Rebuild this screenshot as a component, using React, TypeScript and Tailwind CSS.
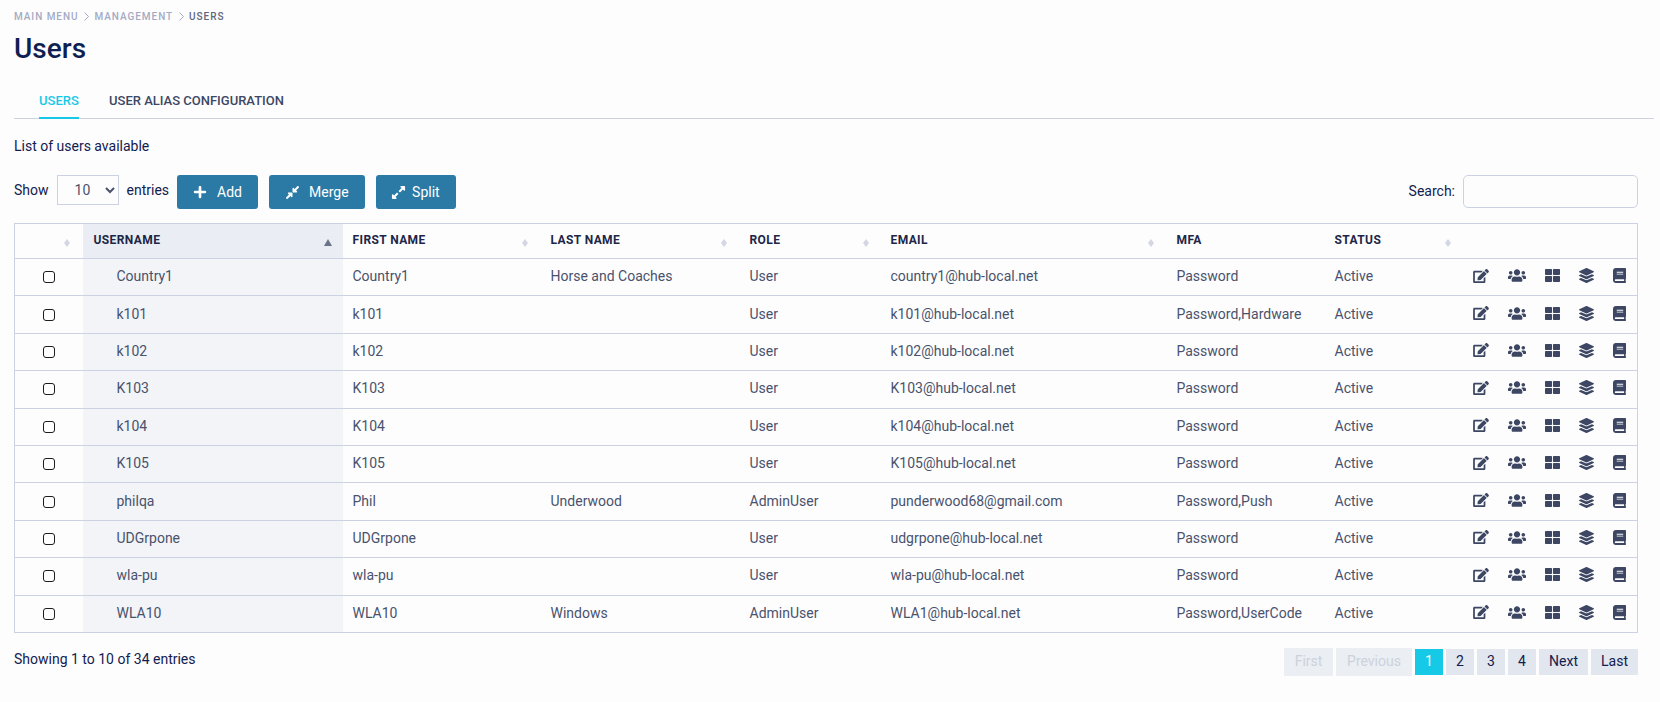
import { FaEdit, FaUsers, FaThLarge, FaLayerGroup, FaBook, FaPlus, FaCompressAlt, FaExpandAlt } from "react-icons/fa";

const users = [
  ["Country1", "Country1", "Horse and Coaches", "User", "country1@hub-local.net", "Password"],
  ["k101", "k101", "", "User", "k101@hub-local.net", "Password,Hardware"],
  ["k102", "k102", "", "User", "k102@hub-local.net", "Password"],
  ["K103", "K103", "", "User", "K103@hub-local.net", "Password"],
  ["k104", "K104", "", "User", "k104@hub-local.net", "Password"],
  ["K105", "K105", "", "User", "K105@hub-local.net", "Password"],
  ["philqa", "Phil", "Underwood", "AdminUser", "punderwood68@gmail.com", "Password,Push"],
  ["UDGrpone", "UDGrpone", "", "User", "udgrpone@hub-local.net", "Password"],
  ["wla-pu", "wla-pu", "", "User", "wla-pu@hub-local.net", "Password"],
  ["WLA10", "WLA10", "Windows", "AdminUser", "WLA1@hub-local.net", "Password,UserCode"],
];

const headers = [
  { label: "", width: "w-[68px]", mark: "right-[13px]" },
  { label: "USERNAME", width: "w-[260px]", mark: "right-[11px]", active: true },
  { label: "FIRST NAME", width: "w-[198px]", mark: "right-[13px]" },
  { label: "LAST NAME", width: "w-[199px]", mark: "right-[13px]" },
  { label: "ROLE", width: "w-[141px]", mark: "right-[12px]" },
  { label: "EMAIL", width: "w-[286px]", mark: "right-[13px]" },
  { label: "MFA", width: "w-[158px]" },
  { label: "STATUS", width: "w-[132px]", mark: "right-[6px]" },
  { label: "", width: "" },
];

function SortMark({ active, pos }: { active?: boolean; pos: string }) {
  if (active) {
    return <span className={`absolute ${pos} top-[15px] h-0 w-0 border-x-[4px] border-b-[7px] border-x-transparent border-b-[#6b7388]`} />;
  }
  return (
    <span className={`absolute ${pos} top-[15px] flex flex-col`}>
      <span className="h-0 w-0 border-x-[3.5px] border-b-[4px] border-x-transparent border-b-[#d3d7e1]" />
      <span className="h-0 w-0 border-x-[3.5px] border-t-[4px] border-x-transparent border-t-[#d3d7e1]" />
    </span>
  );
}

function Crumb() {
  return (
    <svg className="mx-[5.5px] h-[9px] w-[5px]" viewBox="0 0 5 9" fill="none" stroke="#a4abc4" strokeWidth="1">
      <path d="M0.5 0.5L4.5 4.5L0.5 8.5" />
    </svg>
  );
}

function Btn({ icon, label, className }: { icon: React.ReactNode; label: string; className: string }) {
  return (
    <button className={`flex h-[34px] items-center rounded-[3px] bg-[#2b7aa6] text-[14px] text-white ${className}`}>
      {icon}
      {label}
    </button>
  );
}

function PageBtn({ label, width, state }: { label: string; width: string; state?: "disabled" | "current" }) {
  const look =
    state === "disabled"
      ? "h-[28px] bg-[#ebeef3] text-[#ccd2dc]"
      : state === "current"
        ? "h-[26px] bg-[#16c9e6] text-white"
        : "h-[26px] bg-[#e2e6ee] text-[#12204f]";
  return <span className={`flex items-center justify-center text-[14px] ${width} ${look}`}>{label}</span>;
}

export default function App() {
  return (
    <div className="h-[702px] w-[1660px] overflow-hidden bg-[#fdfdfe] pt-[11px] font-['Roboto',sans-serif] text-[#12204f]">
      <div className="flex h-[11px] items-center pl-[14px] text-[10px] font-medium leading-[11px] tracking-[0.95px] text-[#a4abc4]">
        MAIN MENU
        <Crumb />
        MANAGEMENT
        <Crumb />
        <span className="text-[#5d6680]">USERS</span>
      </div>
      <h1 className="mt-[9px] pl-[14px] text-[28px] font-medium leading-[36px] text-[#0f1f52]">Users</h1>

      <div className="ml-[14px] mr-[6px] mt-[22px] flex h-[30px] items-start border-b border-[#cbd3e3] pl-[25px] text-[13px] font-medium">
        <span className="h-[30px] w-[40px] border-b-2 border-[#16c9e6] pt-[5px] text-center leading-[14px] text-[#16c9e6]">USERS</span>
        <span className="ml-[30px] pt-[5px] leading-[14px] text-[#3d4763]">USER ALIAS CONFIGURATION</span>
      </div>

      <p className="ml-[14px] mt-[18px] text-[14px] leading-[18px]">List of users available</p>

      <div className="ml-[14px] mr-[22px] mt-[20px] flex h-[34px] items-center">
        <span className="-mt-[4px] text-[14px] leading-[18px]">Show</span>
        <select className="-mt-[4px] ml-[8px] h-[30px] w-[62px] border border-[#cbd3e3] bg-transparent pl-[13px] text-[14px] text-[#49526c]" defaultValue="10">
          <option>10</option>
          <option>25</option>
          <option>50</option>
        </select>
        <span className="-mt-[4px] ml-[8px] text-[14px] leading-[18px]">entries</span>
        <Btn className="ml-[8px] w-[81px] pl-[16px]" icon={<FaPlus className="mr-[10px] h-[14px] w-[14px]" />} label="Add" />
        <Btn className="ml-[11px] w-[96px] pl-[16px]" icon={<FaCompressAlt className="mr-[9px] h-[15px] w-[15px]" />} label="Merge" />
        <Btn className="ml-[11px] w-[80px] pl-[15px]" icon={<FaExpandAlt className="mr-[6px] h-[15px] w-[15px]" />} label="Split" />
        <span className="-mt-[2px] ml-auto text-[14px] leading-[18px]">Search:</span>
        <input className="-mt-[1px] ml-[8px] h-[33px] w-[175px] rounded-[5px] border border-[#cbd3e3] bg-transparent" />
      </div>

      <table className="ml-[14px] mt-[14px] w-[1624px] table-fixed border-collapse border border-[#cbd3e3] text-[14px] text-[#49526c]">
        <thead>
          <tr className="h-[35px] border-b border-[#cbd3e3]">
            {headers.map((h, i) => (
              <th
                key={i}
                className={`relative ${h.width} pb-[3px] text-left text-[12px] font-bold tracking-[0.4px] text-[#1c2747] ${h.active ? "bg-[#eaedf3] pl-[11px]" : "pl-[10px]"}`}
              >
                {h.label}
                {h.mark && <SortMark active={h.active} pos={h.mark} />}
              </th>
            ))}
          </tr>
        </thead>
        <tbody>
          {users.map((u) => (
            <tr key={u[0]} className="h-[37.4px] border-b border-[#cbd3e3]">
              <td className="pl-[28px]">
                <span className="block h-[12px] w-[12px] rounded-[3px] border border-[#1c1c1c] bg-white" />
              </td>
              <td className="bg-[#f2f4f8] pb-[1px] pl-[34px]">{u[0]}</td>
              <td className="pb-[1px] pl-[10px]">{u[1]}</td>
              <td className="pb-[1px] pl-[10px]">{u[2]}</td>
              <td className="pb-[1px] pl-[10px]">{u[3]}</td>
              <td className="pb-[1px] pl-[10px]">{u[4]}</td>
              <td className="pb-[1px] pl-[10px]">{u[5]}</td>
              <td className="pb-[1px] pl-[10px]">Active</td>
              <td className="pb-[3px]">
                <div className="flex items-center pl-[16px] text-[#3d4763]">
                  <FaEdit className="h-[14px] w-[16px]" />
                  <FaUsers className="ml-[19px] h-[15px] w-[18px]" />
                  <FaThLarge className="ml-[19px] h-[15px] w-[15px]" />
                  <FaLayerGroup className="ml-[19px] h-[15px] w-[15px]" />
                  <FaBook className="ml-[19px] h-[15px] w-[13px]" />
                </div>
              </td>
            </tr>
          ))}
        </tbody>
      </table>

      <div className="ml-[14px] mr-[22px] mt-[16px] flex items-start justify-between">
        <span className="mt-[1px] text-[14px] leading-[18px]">Showing 1 to 10 of 34 entries</span>
        <div className="-mt-[1px] flex items-center gap-[3px]">
          <PageBtn label="First" width="w-[49px]" state="disabled" />
          <PageBtn label="Previous" width="w-[76px]" state="disabled" />
          <PageBtn label="1" width="w-[28px]" state="current" />
          <PageBtn label="2" width="w-[28px]" />
          <PageBtn label="3" width="w-[28px]" />
          <PageBtn label="4" width="w-[28px]" />
          <PageBtn label="Next" width="w-[49px]" />
          <PageBtn label="Last" width="w-[47px]" />
        </div>
      </div>
    </div>
  );
}
